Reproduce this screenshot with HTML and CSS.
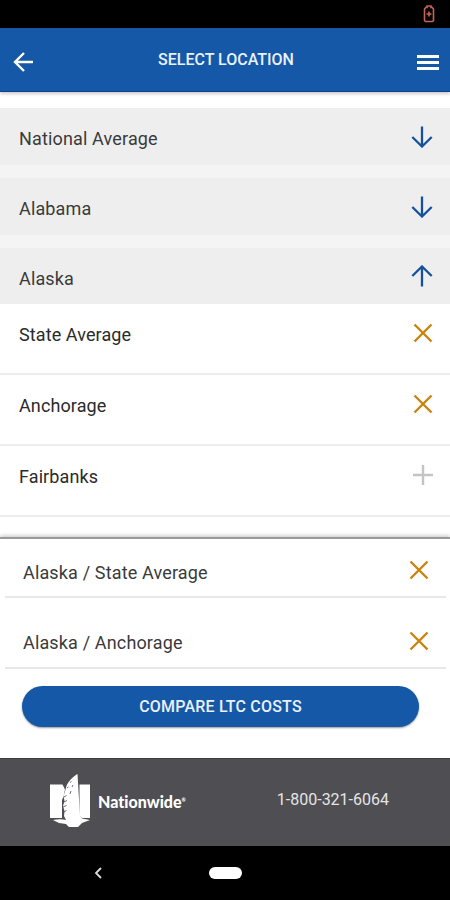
FILE: index.html
```html
<!DOCTYPE html>
<html lang="en">
<head>
<meta charset="UTF-8">
<meta name="viewport" content="width=device-width, initial-scale=1.0">
<title>Select Location</title>
<link rel="stylesheet" href="styles.css">
</head>
<body>

<div class="screen">
    <!-- Status bar -->
    <div class="status-bar">
        <svg class="battery" width="12" height="18" viewBox="0 0 12 18">
            <path d="M4 2.500V1h4v1.500h1.200L10.500 4v11.500L9.500 16.500h-7L1.500 15.500V4L2.800 2.500z"/>
            <path d="M6 6.500v5M3.500 9h5"/>
        </svg>
    </div>

    <!-- Header -->
    <header class="header">
        <svg class="back" width="22" height="22" viewBox="0 0 22 22">
            <path d="M20 11H2.500M11 2L2 11l9 9"/>
        </svg>
        <h1 class="title">SELECT LOCATION</h1>
        <div class="menu"><span></span><span></span><span></span></div>
    </header>

    <!-- Locations -->
    <main class="locations">
        <div class="state-list">
            <div class="state">
                <span>National Average</span>
                <svg class="arrow" width="22" height="22" viewBox="0 0 22 22"><path d="M11 .5v20M1.300 11L11 20.500l9.700-9.500"/></svg>
            </div>
            <div class="state">
                <span>Alabama</span>
                <svg class="arrow" width="22" height="22" viewBox="0 0 22 22"><path d="M11 .5v20M1.300 11L11 20.500l9.700-9.500"/></svg>
            </div>
            <div class="state">
                <span>Alaska</span>
                <svg class="arrow" width="22" height="22" viewBox="0 0 22 22"><path d="M11 21.500v-20M1.300 11L11 1.500l9.700 9.500"/></svg>
            </div>
        </div>
        <div class="city">
            <span>State Average</span>
            <svg class="remove" width="20" height="20" viewBox="0 0 20 20"><path d="M1.500 1.500l17 17M18.500 1.500l-17 17"/></svg>
        </div>
        <div class="city">
            <span>Anchorage</span>
            <svg class="remove" width="20" height="20" viewBox="0 0 20 20"><path d="M1.500 1.500l17 17M18.500 1.500l-17 17"/></svg>
        </div>
        <div class="city">
            <span>Fairbanks</span>
            <svg class="add" width="20" height="20" viewBox="0 0 20 20"><path d="M10 0v20M0 10h20"/></svg>
        </div>
    </main>

    <!-- Selected locations -->
    <section class="selected">
        <div class="selected-item">
            <span>Alaska / State Average</span>
            <svg class="remove" width="20" height="20" viewBox="0 0 20 20"><path d="M1.500 1.500l17 17M18.500 1.500l-17 17"/></svg>
        </div>
        <div class="selected-item">
            <span>Alaska / Anchorage</span>
            <svg class="remove" width="20" height="20" viewBox="0 0 20 20"><path d="M1.500 1.500l17 17M18.500 1.500l-17 17"/></svg>
        </div>
        <button class="compare">COMPARE LTC COSTS</button>
    </section>

    <!-- Footer -->
    <footer class="footer">
        <div class="brand">
            <svg class="logo" width="42" height="54" viewBox="0 0 42 54">
                <path d="M1 10.500h12.500l2.500 5-1.500 7L13 26v18H1z"/>
                <path d="M30.500 10.500H41V44h-8l-2.500-2z"/>
                <path d="M28.500 0C22 4 17.500 9 16.500 16l-2 6 1 5-1.500 5 1.500 5-.5 5 2 4c-4-1-8-1-13 0l6 3 7 1 3 3h9l4-4 8-3-8-1.500-2-2.500z"/>
                <path class="feather" d="M15 23l2.500-1.500M15 28l3-1.500M14 33l3.500-1.500M15 38l2.500-1.500M18 14l1.500-1M21 8.500l1.500-1M23 13l1-2M21 20l1-3"/>
            </svg>
            <span class="brand-name">Nationwide<sup>®</sup></span>
        </div>
        <span class="phone">1-800-321-6064</span>
    </footer>

    <!-- Navigation bar -->
    <nav class="nav-bar">
        <svg class="nav-back" width="8" height="12" viewBox="0 0 8 12"><path d="M7 1L2 6l5 5"/></svg>
        <span class="home"></span>
    </nav>
</div>

</body>
</html>
```
FILE: styles.css
```css
* {
    box-sizing: border-box;
}

body {
    margin: 0;
    background: #000;
    font-family: Roboto, sans-serif;
    color: #3a3a3a;
}

svg {
    display: block;
    flex: none;
    fill: none;
}

.screen {
    width: 450px;
    height: 900px;
    display: flex;
    flex-direction: column;
    overflow: hidden;
}

.status-bar {
    height: 28px;
    display: flex;
    justify-content: flex-end;
    padding: 5px 15px 0 0;
    background: #000;
}

.battery {
    stroke: #c4665a;
    stroke-width: 1.6;
}

.header {
    height: 64px;
    display: flex;
    align-items: center;
    justify-content: space-between;
    padding: 5px 11px 0 13px;
    background: #1558a7;
    border-bottom: 1px solid #0c4390;
    box-shadow: 0 2px 3px rgba(0, 0, 0, 0.2);
    z-index: 1;
}

.back {
    stroke: #fff;
    stroke-width: 2.4;
}

.title {
    margin: 0 0 4px;
    font-size: 16px;
    font-weight: 500;
    line-height: 20px;
    color: #e9f1fb;
}

.menu {
    width: 22px;
    display: flex;
    flex-direction: column;
    gap: 3px;
}

.menu span {
    height: 3px;
    background: #fff;
}

.locations {
    height: 445px;
    background: #fff;
    padding-top: 16px;
}

.state-list {
    display: flex;
    flex-direction: column;
    gap: 13px;
    background: #f4f4f4;
}

.state {
    height: 57px;
    display: flex;
    align-items: center;
    justify-content: space-between;
    padding: 4px 17px 0 19px;
    background: #eee;
    font-size: 18px;
    letter-spacing: 0.15px;
}

.state:last-child {
    height: 56px;
}

.arrow {
    margin-bottom: 4px;
    stroke: #14509c;
    stroke-width: 2.3;
}

.city {
    height: 71px;
    display: flex;
    align-items: center;
    justify-content: space-between;
    padding: 0 17px 8px 19px;
    border-bottom: 2px solid #ececec;
    font-size: 18px;
    letter-spacing: 0.1px;
    color: #2a2a2a;
}

.city svg,
.selected-item svg {
    margin-bottom: 4px;
}

.remove {
    stroke: #c98410;
    stroke-width: 2.4;
}

.add {
    stroke: #c4c4c4;
    stroke-width: 2.4;
}

.selected {
    height: 221px;
    display: flex;
    flex-direction: column;
    padding: 0 4px 0 5px;
    background: #fff;
    border-top: 2px solid #999;
    box-shadow: 0 -1px 4px rgba(0, 0, 0, 0.25);
}

.selected-item {
    height: 71px;
    display: flex;
    align-items: center;
    justify-content: space-between;
    padding: 20px 17px 0 18px;
    border-bottom: 2px solid #e8e8e8;
    font-size: 18px;
    letter-spacing: 0.15px;
}

.selected-item:first-child {
    height: 59px;
    padding-top: 9px;
}

.compare {
    height: 41px;
    margin: 17px 27px 0 17px;
    padding: 0;
    border: none;
    border-radius: 21px;
    background: #1558a7;
    box-shadow: 0 1px 2px rgba(0, 0, 0, 0.4);
    font: 500 16px Roboto, sans-serif;
    letter-spacing: 0.2px;
    color: #e9f1fb;
}

.footer {
    height: 88px;
    display: flex;
    justify-content: space-between;
    padding: 15px 61px 0 49px;
    background: #4f4e52;
    border-top: 1px solid #3d3c40;
}

.brand {
    display: flex;
    gap: 7px;
}

.logo {
    fill: #fff;
}

.feather {
    stroke: #4f4e52;
    stroke-width: 0.8;
}

.brand-name {
    margin-top: 18px;
    font: 900 16px/20px Lato, sans-serif;
    font-variant-ligatures: none;
    color: #fff;
}

.brand-name sup {
    font-size: 5px;
    line-height: 0;
    vertical-align: 6px;
}

.phone {
    margin-top: 16px;
    font-size: 16px;
    line-height: 20px;
    color: #e4e4e6;
}

.nav-bar {
    height: 54px;
    display: flex;
    align-items: center;
    padding-left: 94px;
    background: #000;
}

.nav-back {
    stroke: #ddd;
    stroke-width: 1.8;
}

.home {
    width: 33px;
    height: 12px;
    margin-left: 107px;
    border-radius: 6px;
    background: #fff;
}
```
